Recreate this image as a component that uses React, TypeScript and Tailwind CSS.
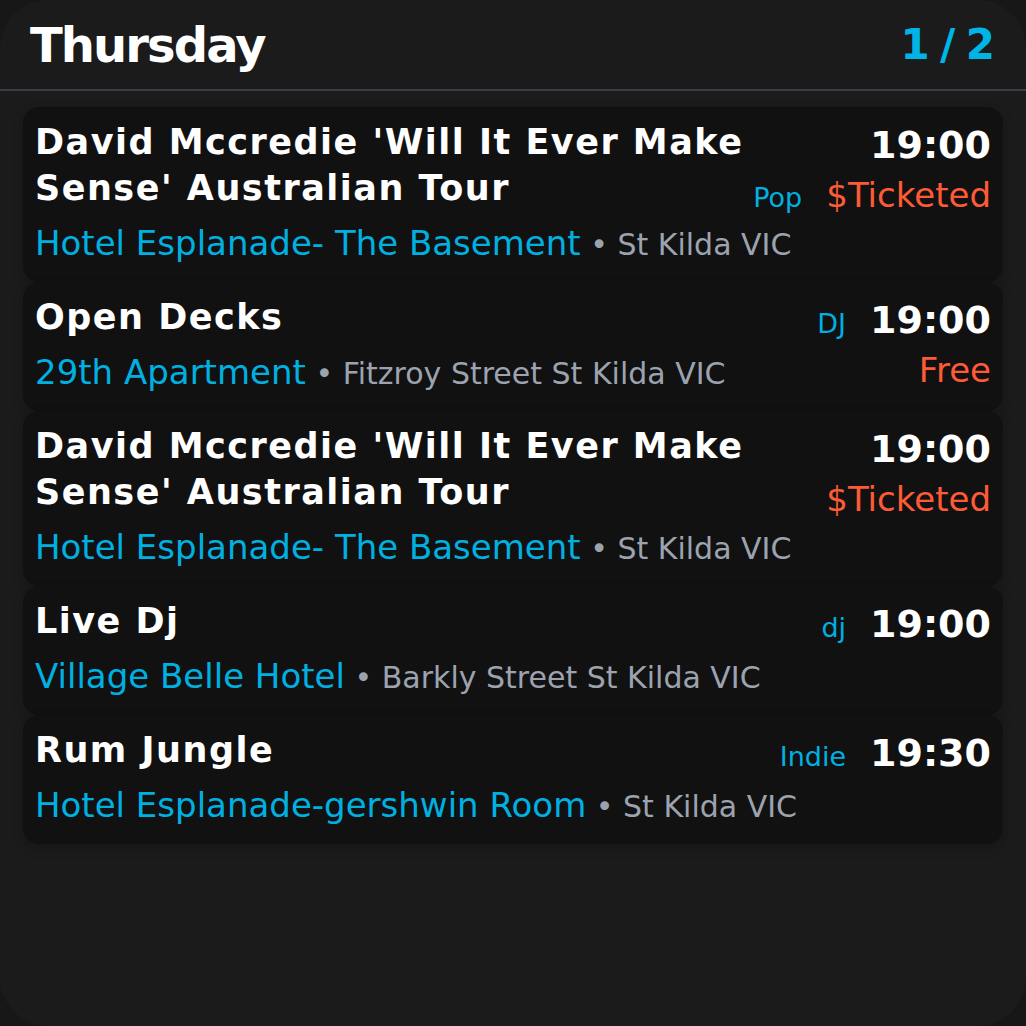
type Show = {
  title: string;
  venue: string;
  place: string;
  time: string;
  genre?: string;
  genreRow?: 1 | 2;
  price?: string;
};

const shows: Show[] = [
  {
    title: "David Mccredie 'Will It Ever Make Sense' Australian Tour",
    venue: "Hotel Esplanade- The Basement",
    place: "St Kilda VIC",
    time: "19:00",
    genre: "Pop",
    genreRow: 2,
    price: "$Ticketed",
  },
  {
    title: "Open Decks",
    venue: "29th Apartment",
    place: "Fitzroy Street St Kilda VIC",
    time: "19:00",
    genre: "DJ",
    genreRow: 1,
    price: "Free",
  },
  {
    title: "David Mccredie 'Will It Ever Make Sense' Australian Tour",
    venue: "Hotel Esplanade- The Basement",
    place: "St Kilda VIC",
    time: "19:00",
    price: "$Ticketed",
  },
  {
    title: "Live Dj",
    venue: "Village Belle Hotel",
    place: "Barkly Street St Kilda VIC",
    time: "19:00",
    genre: "dj",
    genreRow: 1,
  },
  {
    title: "Rum Jungle",
    venue: "Hotel Esplanade-gershwin Room",
    place: "St Kilda VIC",
    time: "19:30",
    genre: "Indie",
    genreRow: 1,
  },
];

function Genre({ label }: { label: string }) {
  return <span className="text-[27px] leading-none text-[#00b0e0]">{label}</span>;
}

function ShowCard({ show }: { show: Show }) {
  return (
    <div className="flow-root rounded-2xl bg-[#111111] px-3 pt-3 pb-[15px] shadow-[0_4px_12px_rgba(0,0,0,0.2)]">
      <div className="float-right ml-1 flex flex-col items-end">
        <div className="flex items-baseline gap-6">
          {show.genre && show.genreRow === 1 && <Genre label={show.genre} />}
          <span className="text-[38px] font-bold leading-[52px] text-white">{show.time}</span>
        </div>
        {(show.price || show.genreRow === 2) && (
          <div className="flex items-baseline gap-6">
            {show.genre && show.genreRow === 2 && <Genre label={show.genre} />}
            {show.price && (
              <span className="text-[34px] leading-[48px] text-[#ff5a36]">{show.price}</span>
            )}
          </div>
        )}
      </div>
      <div className="text-[35px] font-bold leading-[46px] tracking-[1.5px] text-white">
        {show.title}
      </div>
      <div className="mt-2 text-[34px] leading-[48px]">
        <span className="text-[#00b0e0]">{show.venue}</span>
        <span className="text-[30px] leading-none text-[#9ca3af]"> • {show.place}</span>
      </div>
    </div>
  );
}

export default function App() {
  return (
    <div className="min-h-[1026px] bg-[#171717] font-['DejaVu_Sans',sans-serif]">
      <div className="h-[1026px] overflow-hidden rounded-[48px] bg-[#1b1b1b]">
        <header className="flex h-[91px] items-center justify-between border-b-2 border-[#383d47] pl-[30px] pr-[33px]">
          <h1 className="text-[48px] font-bold tracking-[-0.04em] text-white">Thursday</h1>
          <span className="text-[42px] font-bold tracking-[-0.05em] text-[#00b4e6]">1 / 2</span>
        </header>
        <div className="mx-[23px] mt-4 flex flex-col">
          {shows.map((show, i) => (
            <ShowCard key={i} show={show} />
          ))}
        </div>
      </div>
    </div>
  );
}
